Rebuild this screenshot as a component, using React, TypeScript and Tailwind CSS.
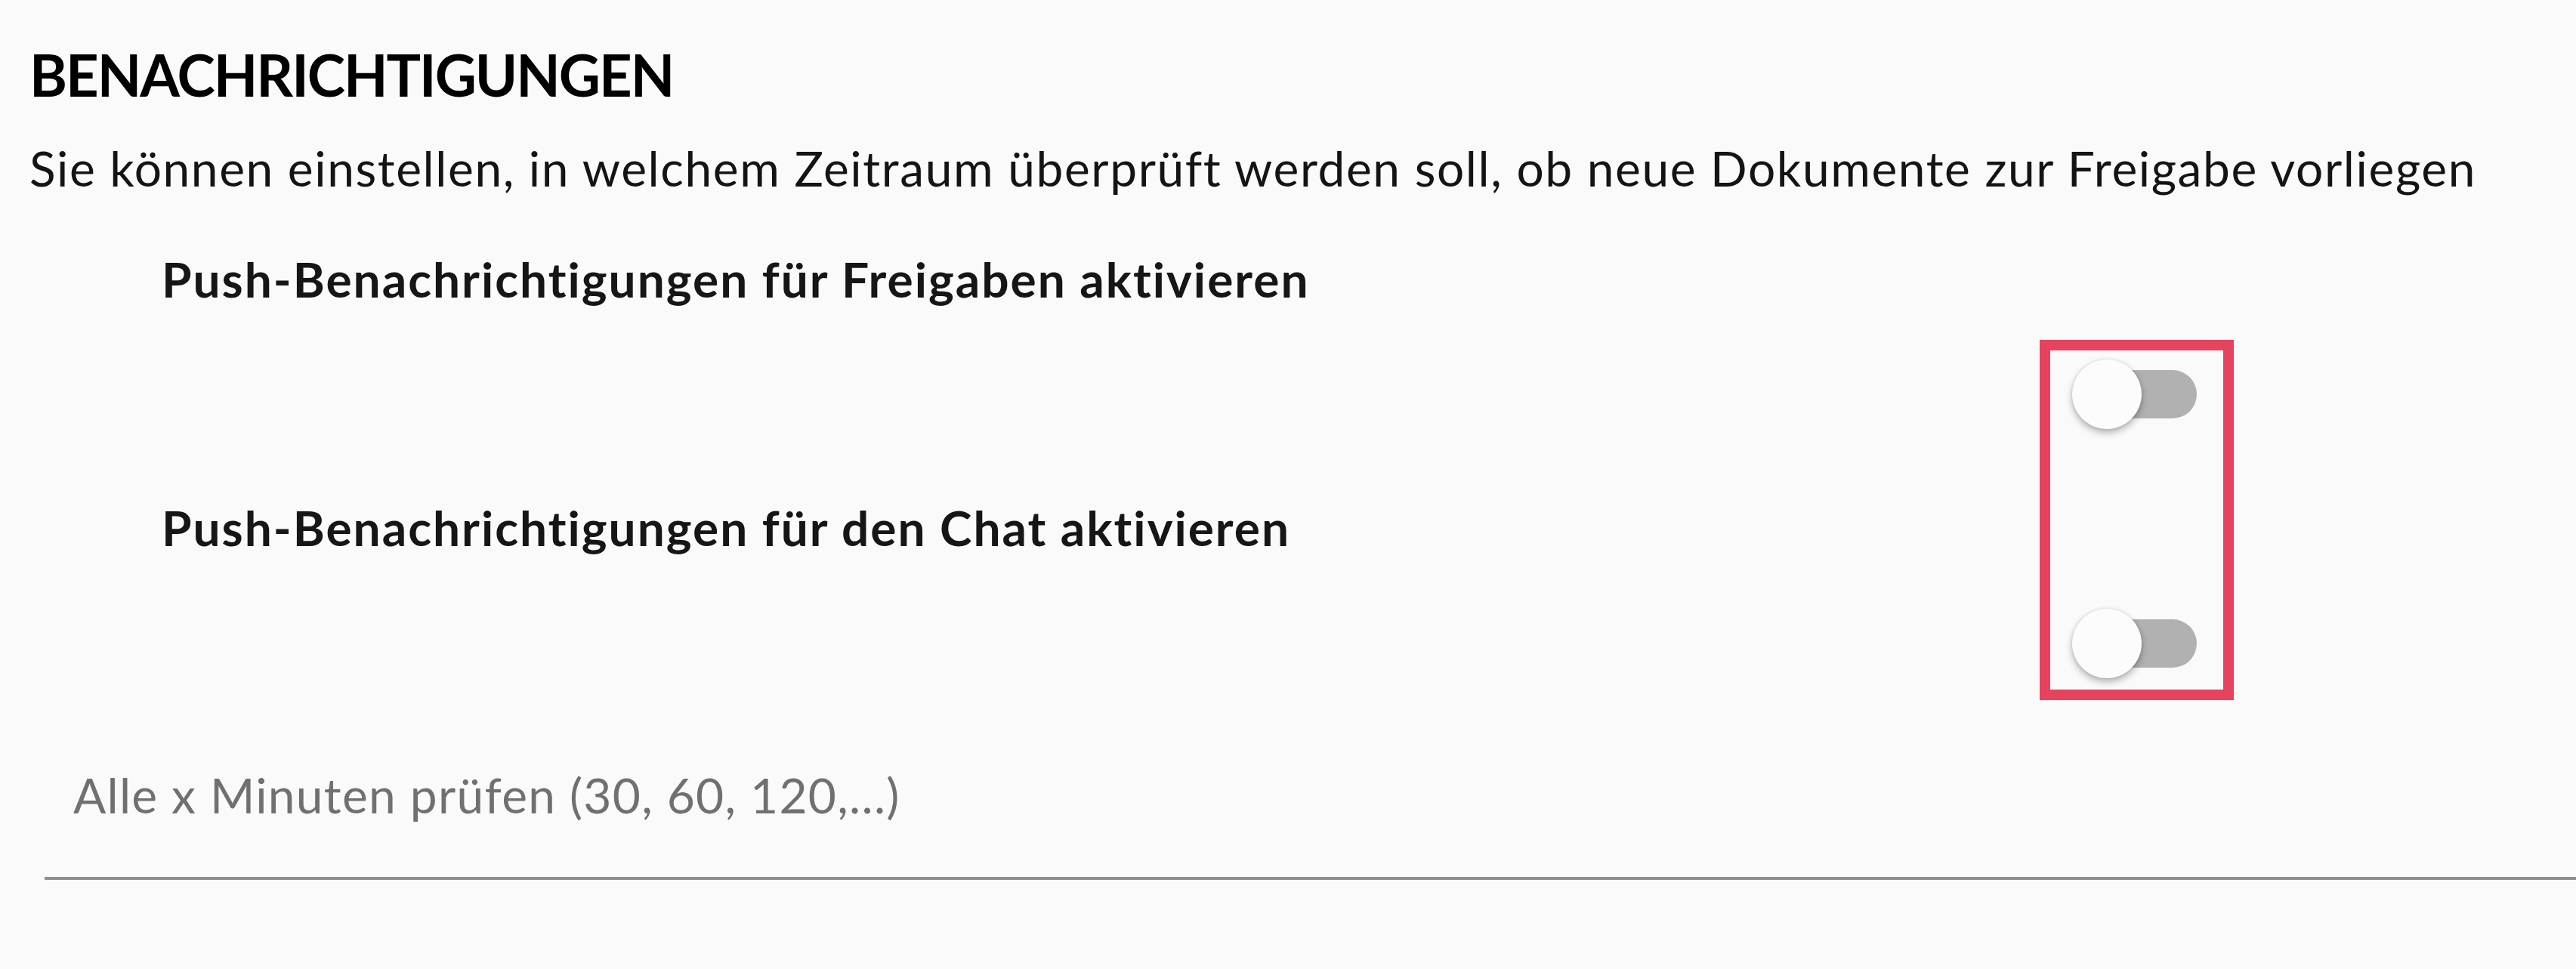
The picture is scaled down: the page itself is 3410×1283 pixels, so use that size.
import React from 'react';

const Toggle = () => (
  <div className="relative w-[165px] h-[92px]">
    <div className="absolute left-[9px] top-[14px] w-[156px] h-[64px] rounded-full bg-[#b1b1b1]" />
    <div className="absolute left-0 top-0 w-[92px] h-[92px] rounded-full bg-[#fcfcfc] shadow-[0_5px_10px_rgba(0,0,0,0.28),0_0_4px_rgba(0,0,0,0.12)]" />
  </div>
);

const ToggleRow = () => (
  <div className="flex justify-end pr-[502px]">
    <Toggle />
  </div>
);

export default function App() {
  return (
    <div className="relative w-[3410px] h-[1283px] overflow-hidden bg-[#fafafa] font-['Lato','Liberation_Sans',sans-serif]">
      <div className="flex flex-col pt-[53px]">
        <h1 className="pl-[39px] text-[76px] leading-[92px] tracking-[-2px] font-bold text-black uppercase">
          Benachrichtigungen
        </h1>
        <p className="mt-[39px] pl-[39px] text-[64px] leading-[77px] tracking-[1.6px] text-[#141414]">
          Sie können einstellen, in welchem Zeitraum überprüft werden soll, ob neue Dokumente zur Freigabe vorliegen
        </p>
        <p className="mt-[70px] pl-[214px] text-[64px] leading-[77px] tracking-[2px] font-bold text-[#161616]">
          Push-Benachrichtigungen für Freigaben aktivieren
        </p>
        <div className="mt-[68px]">
          <ToggleRow />
        </div>
        <p className="mt-[92px] pl-[214px] text-[64px] leading-[77px] tracking-[2px] font-bold text-[#161616]">
          Push-Benachrichtigungen für den Chat aktivieren
        </p>
        <div className="mt-[69px]">
          <ToggleRow />
        </div>
        <div className="mt-[116px] ml-[59px]">
          <input
            type="text"
            placeholder="Alle x Minuten prüfen (30, 60, 120,...)"
            className="w-full bg-transparent pl-[38px] pb-[70px] text-[64px] leading-[77px] tracking-[1.3px] text-[#333] placeholder:text-[#707070] border-b-[4px] border-[#8f8f8f] outline-none"
          />
        </div>
      </div>
      <div className="absolute left-[2700px] top-[450px] w-[257px] h-[477px] border-[14px] border-[#e6435f]" />
    </div>
  );
}
